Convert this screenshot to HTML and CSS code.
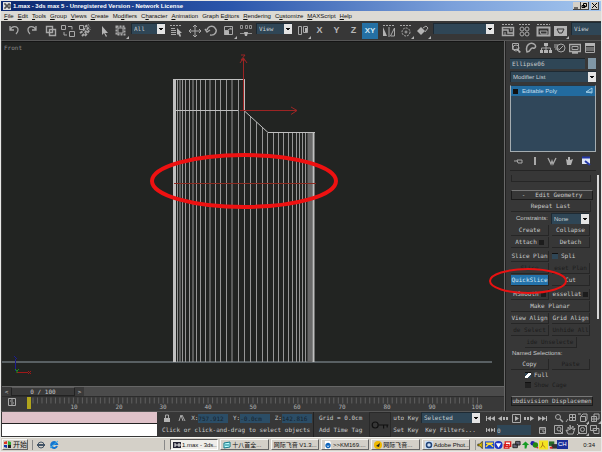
FILE: index.html
```
<!DOCTYPE html>
<html>
<head>
    <meta charset="utf-8">
    <title>1.max - 3ds max 5</title>
    <link rel="stylesheet" href="styles.css">
</head>
<body>
    <!-- title bar -->
    <header class="titlebar">
        <svg class="app-icon" viewBox="0 0 8 8"><path d="M0 0h8v8H0z" fill="#ddd"/><path d="M1 2h2v4H1M5 2h2v4H5zM3 4h2" fill="none" stroke="#222"/></svg>
        <h1>1.max - 3ds max 5 - Unregistered Version - Network License</h1>
        <div class="win-buttons">
            <button aria-label="Minimize"><svg viewBox="0 0 7 7"><path d="M1 6h4" stroke="#000"/></svg></button>
            <button aria-label="Restore"><svg viewBox="0 0 7 7"><path d="M2.500 1.500h3v3h-3zM1 3.500h3v2H1z" fill="none" stroke="#000"/></svg></button>
            <button aria-label="Close" class="close"><svg viewBox="0 0 7 7"><path d="M1 1l5 5M6 1l-5 5" stroke="#000"/></svg></button>
        </div>
    </header>

    <nav class="menu">
        <a href="#"><u>F</u>ile</a><a href="#"><u>E</u>dit</a><a href="#"><u>T</u>ools</a><a href="#"><u>G</u>roup</a><a href="#"><u>V</u>iews</a><a href="#"><u>C</u>reate</a><a href="#">Mo<u>d</u>ifiers</a><a href="#">C<u>h</u>aracter</a><a href="#"><u>A</u>nimation</a><a href="#">Graph E<u>d</u>itors</a><a href="#"><u>R</u>endering</a><a href="#">C<u>u</u>stomize</a><a href="#"><u>M</u>AXScript</a><a href="#"><u>H</u>elp</a>
    </nav>

    <!-- main toolbar -->
    <div class="toolbar">
        <div class="group">
            <button aria-label="Undo"><svg viewBox="0 0 17 17"><path d="M4 4v4h4M4 8c2-5 8-4 8 0 0 2-1 3-2 4" stroke-width="1.300"/></svg></button>
            <button aria-label="Redo"><svg viewBox="0 0 17 17"><path d="M13 4v4H9M13 8c-2-5-8-4-8 0 0 2 1 3 2 4" stroke-width="1.300"/></svg></button>
        </div>
        <div class="group">
            <button aria-label="Link"><svg viewBox="0 0 17 17"><path d="M4.500 4.500h6v6h-6zM7.500 7.500h6v6h-6z" stroke-width="1.400"/></svg></button>
            <button aria-label="Unlink"><svg viewBox="0 0 17 17"><path d="M2.500 3.500h4v4h-4zM10.500 9.500h5v5h-5zM9 4.500h4v3M5 10v3h3"/></svg></button>
            <button aria-label="Bind"><svg viewBox="0 0 17 17"><path d="M3.500 3.500h4v4h-4z"/><path d="M4 11l3-2 3-5 3-1M6 14l3-3 3-5 2-1M9 14l3-4 2-3" stroke-dasharray="3 1" stroke-width="2"/></svg></button>
        </div>
        <div class="group">
            <button aria-label="Select"><svg viewBox="0 0 17 17"><path class="solid" d="M7 4v9l2-2 2 4 1-1-2-3h3z"/></svg></button>
            <button aria-label="Region"><svg viewBox="0 0 17 17"><path d="M4.500 4.500h8v8h-8z" stroke-width="2" stroke-dasharray="2 1"/><path d="M6 6h5v5H6z"/><path class="solid" d="M17 14v3h-3z"/></svg></button>
        </div>
        <select class="combo w34" aria-label="Selection filter"><option>All</option></select>
        <div class="group">
            <button aria-label="Select by name"><svg viewBox="0 0 17 17"><path d="M3 3.500h11" stroke-dasharray="2 1"/><path d="M4 6.500h4M4 8.500h5M4 10.500h5M4 12.500h5"/><path class="solid" d="M10 6v7l1-1 2 3 1-1-1-3h2z"/></svg></button>
        </div>
        <div class="group">
            <button aria-label="Move"><svg viewBox="0 0 17 17"><path d="M9 3v12M3 9h12M7 5l2-2 2 2M7 13l2 2 2-2M5 7L3 9l2 2M13 7l2 2-2 2"/></svg></button>
            <button aria-label="Rotate"><svg viewBox="0 0 17 17"><path d="M7 13c5 1 8-4 5-7-2-3-7-2-8 2M2 7l2 3 3-2" stroke-width="1.400"/></svg></button>
            <button aria-label="Scale"><svg viewBox="0 0 17 17"><path d="M4.500 4.500h8v8h-8zM4.500 8.500h4v4h-4z"/><path class="solid" d="M5 9h4v4H5zM17 14v3h-3z"/><path d="M8 8l3-2v2"/></svg></button>
            <button aria-label="Offset"><svg viewBox="0 0 17 17"><path d="M3.500 3.500h2v3h-2zM8.500 3.500h2v3h-2zM12.500 3.500h2v3h-2zM3 11.500h12" stroke-width=".8"/><path class="solid" d="M7 10h4l-1 4H8z"/></svg></button>
        </div>
        <select class="combo w35" aria-label="Reference system"><option>View</option></select>
        <div class="group">
            <button aria-label="Pivot"><svg viewBox="0 0 17 17"><path d="M4.500 4.500h3v8h-3zM9.500 4.500h4v6h-4z"/><path class="solid" d="M11 6h2v4h-2zM17 14v3h-3z"/></svg></button>
            <button class="axis">X</button>
            <button class="axis">Y</button>
            <button class="axis">Z</button>
            <button class="axis on">XY</button>
        </div>
        <div class="group">
            <button aria-label="Mirror"><svg viewBox="0 0 17 17"><path d="M3 3.500h12" stroke-dasharray="2 1"/><path class="solid" d="M3 5l4 9H3z"/><path d="M9 5v10M14.500 6v8h-4z"/></svg></button>
            <button aria-label="Array"><svg viewBox="0 0 17 17"><path d="M3 3.500h12" stroke-dasharray="2 1"/><circle cx="9" cy="10" r="4" stroke-dasharray="2 1"/><circle cx="9" cy="10" r="1"/><path class="solid" d="M17 14v3h-3z"/></svg></button>
            <button aria-label="Selection sets"><svg viewBox="0 0 17 17"><path class="solid" d="M3 9l4-4 4 4-4 4zM17 14v3h-3z"/><path d="M9 6l3-2 2 2-3 4"/></svg></button>
        </div>
        <select class="combo w61" aria-label="Named sets"><option></option></select>
        <div class="group far">
            <button aria-label="Curve editor"><svg viewBox="0 0 17 17"><path d="M3 2.500h12" stroke-dasharray="2 1"/><path d="M3.500 5.500h11v8h-11zM4 8h5v3h5" stroke-width="1.500"/><path d="M6 13v-3M12 9V6"/></svg></button>
            <button aria-label="Materials"><svg viewBox="0 0 17 17"><path d="M3 2.500h11" stroke-dasharray="2 1"/><circle cx="6" cy="7" r="2"/><circle cx="11" cy="7" r="2"/><circle cx="6" cy="12" r="2"/><circle cx="11" cy="12" r="2"/></svg></button>
        </div>
        <div class="group">
            <button aria-label="Render scene"><svg viewBox="0 0 17 17"><path d="M2 2.500h13" stroke-dasharray="2 1"/><path d="M2.500 5.500h12v8h-12z" stroke-width="2"/><path d="M5 9h7v3H6z"/></svg></button>
            <button aria-label="Quick render"><svg viewBox="0 0 17 17"><path class="solid" d="M2 4h13v10H2z"/><path d="M5 7h7l-2 4H7z" stroke="#333"/><path class="solid" d="M17 14v3h-3z"/></svg></button>
        </div>
        <select class="combo plain" aria-label="Render type"><option>View</option></select>
    </div>

    <main class="work">
        <section class="left">
            <!-- front viewport -->
            <div class="viewport">
                <svg viewBox="2 42 502 344">
                    <text class="view-name" x="4" y="50">Front</text>
                    <path d="M2 362H492" stroke="#596063" stroke-width="2"/>
                    <g class="wire">
                        <path class="bright" d="M174.500 79V362" stroke-width="3"/>
                        <path d="M177.500 79V362M180 79V362M182.500 79V362M185.500 79V362M189.500 79V362M193 79V362M196.500 79V362M200.500 79V362M205.500 79V362M210 79V362M215.500 79V362M220.500 79V362M226.500 79V362M232 79V362M238.500 79V362M244.500 79V362"/>
                        <path d="M250.500 117V362M256.500 122V362M262.500 128V362M267.500 133V362M273.500 133V362M278.500 133V362M283.500 133V362M288.500 133V362M292.500 133V362M296.500 133V362M299.500 133V362M302.500 133V362M305.500 133V362"/>
                        <path d="M310 133V362" stroke="#686868" stroke-width="5"/>
                        <path class="bright" d="M313.500 133V362" stroke-width="2"/>
                        <path class="bright" d="M173 79.500H244.500V111L268 132.500H315M174 110.500H238"/>
                    </g>
                    <path d="M174 183.500H316" stroke="#8a2a20"/>
                    <g class="gizmo">
                        <path d="M243.500 111V58M240 63l3.500-5 3.500 5M240 110.500H297M291 107l6 3.500-6 4M241 55h4l-4 5h4"/>
                    </g>
                    <ellipse class="mark" cx="244" cy="181" rx="92" ry="26"/>
                    <path d="M15.500 371V359M14 356l3 3" stroke="#1c1c90" fill="none"/>
                    <path d="M17 372.500H28M28 371l3 3M31 371l-3 3" stroke="#a01818" fill="none"/>
                    <path d="M15 369l2 2v2M19 369l-2 2" stroke="#218c21" fill="none"/>
                </svg>
            </div>
            <div class="timeslider">
                <button aria-label="Previous">&lt;</button>
                <button class="thumb">0 / 100</button>
                <button aria-label="Next">&gt;</button>
            </div>
            <div class="ruler">
                <svg viewBox="2 398 502 14">
                    <path d="M28 401.500H480" stroke="#606060" stroke-width="6" stroke-dasharray="1 3.490"/>
                    <path d="M8.500 399.500h7v7h-7zM12 400v6M10 402h1M13 404h1" fill="none" stroke="#aaa"/>
                    <path d="M27 398h4v12h-4z" fill="#b1a51c"/>
                    <g class="ticks">
                        <text x="74" y="410">10</text><text x="119" y="410">20</text><text x="163" y="410">30</text><text x="208" y="410">40</text><text x="253" y="410">50</text><text x="297" y="410">60</text><text x="342" y="410">70</text><text x="387" y="410">80</text><text x="432" y="410">90</text><text x="477" y="410">100</text>
                    </g>
                </svg>
            </div>
        </section>

        <!-- command panel -->
        <aside class="panel">
            <div class="tabs">
                <button aria-label="Create"><svg viewBox="0 0 12 12"><path d="M2.500 1.500h6v6h-6z"/><circle cx="6" cy="6" r="3"/><path class="solid" d="M6 5l5 5-2 1z"/></svg></button>
                <button aria-label="Modify"><svg viewBox="0 0 12 12"><path d="M2 10C0 3 5 0 9 2c3 2 1 5-1 4-3-1-2 4-6 4z" stroke-width="1.500"/></svg></button>
                <button aria-label="Hierarchy"><svg viewBox="0 0 12 12"><path class="solid" d="M4 1h4v3H4zM0 8h3v3H0zM4 8h4v3H4zM9 8h3v3H9z"/><path d="M6 4v4M1.500 8V6h9v2"/></svg></button>
                <button aria-label="Motion"><svg viewBox="0 0 12 12"><circle cx="7" cy="6" r="4"/><path d="M0 3h4M0 5h4M1 7h4M5 8l4-4"/></svg></button>
                <button aria-label="Display"><svg viewBox="0 0 12 12"><path d="M.5 2.500h11v7H.5zM3 11h6" stroke-width="1.500"/><path d="M3 4.500h6v3H3z"/></svg></button>
                <button aria-label="Utilities"><svg viewBox="0 0 12 12"><path class="solid" d="M1 1h10v3H1z"/><path d="M2 6h8M2 8h8M1.500 4v6.500h9V4"/></svg></button>
            </div>
            <div class="name-row">
                <input type="text" value="Ellipse06" aria-label="Object name">
                <button class="swatch" aria-label="Object color"></button>
            </div>
            <select class="combo modlist" aria-label="Modifier list"><option>Modifier List</option></select>
            <div class="stack">
                <div class="stack-item"><span class="plus"></span>Editable Poly<svg viewBox="0 0 8 8"><path d="M1 5l6-4v5zM1 5h6" fill="none" stroke="#9ecbe4"/></svg></div>
            </div>
            <div class="stack-tools">
                <button aria-label="Pin stack"><svg viewBox="0 0 12 12"><path d="M2 6h3M5 5h5v3H6z"/></svg></button>
                <button aria-label="Show end result"><svg viewBox="0 0 12 12"><path d="M6 2v8" stroke-width="2"/></svg></button>
                <button aria-label="Make unique"><svg viewBox="0 0 12 12"><path d="M2 3l3 6 1-3 1 3 3-6" stroke-width="1.300"/></svg></button>
                <button aria-label="Remove modifier"><svg viewBox="0 0 12 12"><path class="solid" d="M3 4l2 1V2h2v3l3-1-2 6H4z"/></svg></button>
                <button aria-label="Configure sets"><svg viewBox="0 0 12 12"><path d="M2 2h8v7H2z" fill="#dde4f4" stroke="none"/><path d="M2 2.500h8M5 6l5 4" stroke="#2438a8" stroke-width="2"/></svg></button>
            </div>

            <div class="rollouts">
                <div class="rollout-end"></div>
                <button class="rollout-head"><span>-</span>Edit Geometry</button>
                <button class="pbtn wide">Repeat Last</button>
                <div class="constraints">
                    <label for="constraints">Constraints:</label>
                    <select id="constraints" class="combo"><option>None</option></select>
                </div>
                <div class="grid">
                    <button class="pbtn">Create</button>
                    <button class="pbtn">Collapse</button>
                    <button class="pbtn">Attach<i class="box"></i></button>
                    <button class="pbtn">Detach</button>
                </div>
                <div class="grid">
                    <button class="pbtn">Slice Plan</button>
                    <label class="check"><input type="checkbox">Spli</label>
                    <button class="pbtn" disabled>Slice</button>
                    <button class="pbtn" disabled>eset Plan</button>
                    <button class="pbtn active">QuickSlice</button>
                    <button class="pbtn">Cut</button>
                </div>
                <div class="grid">
                    <button class="pbtn">MSmooth<i class="box"></i></button>
                    <button class="pbtn">essellat<i class="box"></i></button>
                    <button class="pbtn span">Make Planar</button>
                    <button class="pbtn">View Align</button>
                    <button class="pbtn">Grid Align</button>
                    <button class="pbtn" disabled>de Select</button>
                    <button class="pbtn" disabled>Unhide All</button>
                    <button class="pbtn span narrow" disabled>ide Unselecte</button>
                </div>
                <p class="caption">Named Selections:</p>
                <div class="grid">
                    <button class="pbtn">Copy</button>
                    <button class="pbtn" disabled>Paste</button>
                </div>
                <div class="checks">
                    <label class="check"><input type="checkbox" checked>Full</label>
                    <label class="check off"><input type="checkbox" checked disabled>Show Cage</label>
                </div>
                <button class="rollout-head last">ubdivision Displacemen</button>
                <svg class="callout" viewBox="0 0 80 28"><ellipse cx="40" cy="14" rx="38" ry="12"/></svg>
            </div>
        </aside>
    </main>

    <!-- status bar -->
    <footer class="status">
        <div class="listener"><div class="macro"></div><div class="script"></div></div>
        <div class="prompt">
            <div class="coords">
                <svg viewBox="0 0 10 10"><path class="solid" d="M2 5h6v4H2z"/><path d="M3.500 5V2h3v3"/></svg>
                <svg viewBox="0 0 10 10"><path d="M2 8l2-6 2 6M5 2l3 6"/></svg>
                <label>X:<input type="text" value="757.912"></label>
                <label>Y:<input type="text" value="-0.0cm"></label>
                <label>Z:<input type="text" value="142.816"></label>
            </div>
            <div class="line">Click or click-and-drag to select objects</div>
        </div>
        <div class="gridinfo">
            <div class="line">Grid = 0.0cm</div>
            <button>Add Time Tag</button>
        </div>
        <button class="key" aria-label="Set keys"><svg viewBox="0 0 16 10"><circle cx="4" cy="5" r="2.500"/><path d="M7 5h8M11 5v3M14 5v2"/></svg></button>
        <div class="keys">
            <button>uto Key</button><select class="combo" aria-label="Key set"><option>Selected</option></select>
            <button>Set Key</button><button>Key Filters...</button>
        </div>
        <div class="transport">
            <button aria-label="Start"><svg viewBox="0 0 12 10"><path class="solid" d="M2 3h1v5H2zM7 3v5L3 5.500zM11 3v5L7 5.500z"/></svg></button>
            <button aria-label="Back"><svg viewBox="0 0 12 10"><path class="solid" d="M5 3v5L1 5.500zM6 4h2v3H6zM9 4h2v3H9z"/></svg></button>
            <button aria-label="Play"><svg viewBox="0 0 12 10"><path d="M2.500 1.500h8v8h-8z"/><path class="solid" d="M5 3v5l4-2.500z"/></svg></button>
            <button aria-label="Forward"><svg viewBox="0 0 12 10"><path class="solid" d="M7 3v5l4-2.500zM4 4h2v3H4zM1 4h2v3H1z"/></svg></button>
            <button aria-label="End"><svg viewBox="0 0 12 10"><path class="solid" d="M10 3h1v5h-1zM6 3v5l4-2.500zM2 3v5l4-2.500z"/></svg></button>
            <button aria-label="Key mode"><svg viewBox="0 0 12 10"><path class="solid" d="M2 3h1v4H2zM3 5l3-2v4zM10 3h1v4h-1zM10 5L7 3v4z"/></svg></button>
            <input type="text" value="0" aria-label="Frame">
            <button aria-label="Time config"><svg viewBox="0 0 12 10"><path d="M3.500 2.500h6v6h-6zM3 4h7M7 5v2h2"/></svg></button>
        </div>
        <div class="nav">
            <button aria-label="Zoom"><svg viewBox="0 0 12 12"><circle cx="5" cy="5" r="2.500"/><path d="M7 7l3 3" stroke-width="1.500"/></svg></button>
            <button aria-label="Zoom all"><svg viewBox="0 0 12 12"><path d="M4.500 2.500h6v6h-6zM4 5.500h7M7.500 2v7M3 7l-2 3"/></svg></button>
            <button aria-label="Extents"><svg viewBox="0 0 12 12"><path d="M3.500 4.500h5v5h-5zM4 4l2-2h4v5L9 9M1 2h3"/><path class="solid" d="M12 9v3H9z"/></svg></button>
            <button aria-label="Extents all"><svg viewBox="0 0 12 12"><path d="M2.500 4.500h5v5h-5zM5 4V2h5v5H8M5 5v4M3 7h4"/><path class="solid" d="M12 9v3H9z"/></svg></button>
            <button aria-label="Zoom region"><svg viewBox="0 0 12 12"><path d="M1.500 1.500h8v8h-8z"/><circle cx="6" cy="5" r="2"/><path d="M7 7l3 3"/></svg></button>
            <button aria-label="Pan"><svg viewBox="0 0 12 12"><path d="M3 10L1 6l2 1V3l2 3V1l1 4 2-3v4l2-2-2 6z"/></svg></button>
            <button aria-label="Arc rotate"><svg viewBox="0 0 12 12"><path d="M1.500 1.500h8v8h-8zM0 0l3 3M11 0L8 3M0 11l3-3"/><circle cx="5.500" cy="5.500" r="2"/><path class="solid" d="M12 9v3H9z"/></svg></button>
            <button aria-label="Maximize"><svg viewBox="0 0 12 12"><path d="M1.500 1.500h6v5h-6zM4 4.500h6v5H5z"/></svg></button>
        </div>
    </footer>

    <!-- taskbar -->
    <div class="taskbar">
        <button class="start"><svg viewBox="0 0 9 9"><path d="M1 2l3-1v3H1z" fill="#d32"/><path d="M5 1l3 1v3H5z" fill="#3a3"/><path d="M1 5h3v3L1 7z" fill="#13a"/><path d="M5 5h3v3H5z" fill="#222"/></svg>开始</button>
        <div class="quick">
            <svg viewBox="0 0 10 10"><circle cx="5" cy="5" r="3" fill="none" stroke="#456"/><path d="M1 5h8" stroke="#456" stroke-width="2"/></svg>
            <svg viewBox="0 0 10 10"><path d="M8 6A3 3 0 1 1 8 4H3" fill="none" stroke="#1575d0" stroke-width="2"/><path d="M1 8l8-7" stroke="#3ab0e8"/></svg>
        </div>
        <div class="tasks">
            <button class="current"><svg viewBox="0 0 8 8"><path d="M0 1h8v6H0z" fill="#223"/><path d="M1 3h2v2H1M5 3h2v2H5z" fill="none" stroke="#eee"/></svg>1.max - 3ds...</button>
            <button><svg viewBox="0 0 8 8"><path d="M1 2l6-1v5L1 7z" fill="#bff" stroke="#178"/><path d="M2 4h4" stroke="#178"/></svg>十八首全...</button>
            <button>网际飞音 V1.3...</button>
            <button><svg viewBox="0 0 8 8"><path d="M1 0h5l1 2v6H1z" fill="#fff"/><path d="M6 5A2 2 0 1 1 6 4H3" fill="none" stroke="#16b" stroke-width="1.500"/></svg>&gt;&gt;KM169....</button>
            <button><svg viewBox="0 0 8 8"><circle cx="4" cy="4" r="4" fill="#eeb800"/><path d="M2 5l4-3-1 4z" fill="#222"/></svg>网际飞音...</button>
            <button><svg viewBox="0 0 8 8"><path d="M0 0h8v8H0z" fill="#cfe0f4"/><circle cx="4" cy="4" r="2.500" fill="none" stroke="#247" stroke-width="1.500"/></svg>Adobe Phot...</button>
        </div>
        <div class="tray">
            <svg viewBox="0 0 10 10"><path d="M2 4h2l3-3v8L4 6H2z" fill="#d8b800" stroke="#222" stroke-width=".8"/></svg>
            <svg viewBox="0 0 10 10"><path d="M0 1h10v8H0z" fill="#1b49c8"/><path d="M1 7l4-4 4 4M1 3h8" fill="none" stroke="#fd3" stroke-width="1.500"/></svg>
            <svg viewBox="0 0 10 10"><circle cx="5" cy="5" r="4.500" fill="#1c35c4"/><path d="M2 3h6L5 8z" fill="#fff"/></svg>
            <svg viewBox="0 0 10 10"><path d="M2.500 1.500h6v5h-6zM1.500 4.500h5v4h-5z" fill="#fff" stroke="#d81c1c" stroke-width="1.500"/></svg>
            <svg viewBox="0 0 10 10"><path d="M4 1h5v4H4zM1 4h5v4H1z" fill="#667" stroke="#222"/></svg>
            <svg viewBox="0 0 10 10"><path d="M5 1l4 4H7l-1 4H4V5H1z" fill="#159c24"/></svg>
            <svg viewBox="0 0 10 10"><circle cx="3" cy="3" r="2.500" fill="#22a"/><circle cx="6" cy="5" r="3" fill="#281"/><path d="M6 8l3-1v2z" fill="#c22"/></svg>
            <svg viewBox="0 0 10 10"><path d="M0 0h10v10H0z" fill="#f4e420"/><path d="M4 2v3M2 8l2-3 3 3" fill="none" stroke="#a66d10"/></svg>
            <svg viewBox="0 0 10 10"><path d="M1 1h6v5H1z" fill="#286b28"/><path d="M4 4h6v5H4z" fill="#333"/><path d="M2 7h3v2H2z" fill="#d22"/></svg>
            <span class="ime">CH</span>
            <time>0:34</time>
        </div>
    </div>
</body>
</html>
```

FILE: styles.css
```
* {
    box-sizing: border-box;
}
body {
    margin: 0;
    padding: 1px;
    min-height: 100vh;
    display: flex;
    flex-direction: column;
    background: #e8e8e6;
    color: #cacaca;
    font: 6px/8px "DejaVu Sans Mono", "Noto Sans CJK SC", monospace;
    overflow-x: hidden;
}
button, input, select {
    margin: 0;
    padding: 0;
    border: 0;
    border-radius: 0;
    background: none;
    color: inherit;
    font: inherit;
    white-space: nowrap;
}
svg {
    display: block;
    flex: none;
}

/* title bar + menu */
.titlebar {
    display: flex;
    align-items: center;
    height: 10px;
    padding: 0 2px;
    gap: 2px;
    background: linear-gradient(90deg, #0b286e, #2b56ab 38%, #7ba0da 75%, #a3c5ee);
    color: #fff;
}
.titlebar h1 {
    flex: 1;
    margin: 0;
    font: bold 6px/10px "Liberation Sans", sans-serif;
}
.app-icon {
    width: 8px;
    height: 8px;
}
.win-buttons {
    display: flex;
}
.win-buttons button {
    width: 8px;
    height: 8px;
    background: #d4d0c8;
    border-right: 1px solid #444;
    border-bottom: 1px solid #444;
}
.win-buttons .close {
    margin-left: 2px;
}
.win-buttons svg {
    width: 7px;
    height: 7px;
}
.menu {
    display: flex;
    gap: 4px;
    height: 10px;
    padding: 0 3px;
    background: #dcdad4;
    font: 6px/10px "Liberation Sans", sans-serif;
}
.menu a {
    color: #111;
    text-decoration: none;
}

/* toolbar */
.toolbar {
    display: flex;
    align-items: center;
    gap: 2px;
    height: 20px;
    padding-left: 5px;
    background: #373737;
    border-bottom: 1px solid #555;
}
.group {
    display: flex;
    align-items: center;
}
.group.far {
    margin-left: 3px;
}
.group button {
    width: 17px;
    height: 17px;
}
.group svg {
    width: 17px;
    height: 17px;
}
.toolbar svg, .panel svg, .status svg {
    fill: none;
    stroke: #a9a9a9;
}
svg .solid {
    fill: #b4b4b4;
    stroke: none;
}
.group .axis {
    color: #b8b8b8;
    font: bold 9px/17px "Liberation Sans", sans-serif;
}
.group .axis.on {
    width: 16px;
    height: 16px;
    background: #2470a4;
    color: #cfe6f4;
    font-size: 8px;
    line-height: 16px;
}
.combo {
    appearance: none;
    height: 11px;
    padding: 0 10px 0 2px;
    border-top: 1px solid #1e2a33;
    border-left: 1px solid #1e2a33;
    color: #c8d0d4;
    background-color: #2f4656;
    background-image: linear-gradient(#111, #111), linear-gradient(#111, #111), linear-gradient(#e4e4e4, #e4e4e4);
    background-position: right 2px top 4px, right 3px top 5px, right;
    background-size: 4px 1px, 2px 1px, 8px 100%;
    background-repeat: no-repeat;
}
.toolbar .combo {
    margin-bottom: 4px;
}
.w34 { width: 34px; }
.w35 { width: 36px; }
.w61 { width: 61px; }
.toolbar .plain {
    flex: 1;
    height: 13px;
    background-image: none;
}

/* work area */
.work {
    display: flex;
}
.left {
    flex: 1;
    min-width: 0;
    background: #3a3a3a;
    border-left: 1px solid #3a3a3a;
    border-right: 1px solid #686868;
}
.viewport {
    background: #222422;
    border-top: 1px solid #151515;
}
.viewport svg, .ruler svg {
    width: 100%;
}
.view-name {
    fill: #8b8b8b;
}
.wire {
    fill: none;
    stroke: #969696;
}
.wire .bright {
    stroke: #c0c0c0;
}
.gizmo {
    fill: none;
    stroke: #9c2424;
}
.mark {
    fill: none;
    stroke: #ee1111;
    stroke-width: 4;
}
.timeslider {
    display: flex;
    height: 11px;
    background: #4b4b4b;
    border-top: 1px solid #666;
    border-bottom: 1px solid #2c2c2c;
}
.timeslider button {
    width: 9px;
    background: #3a3a3a;
}
.timeslider .thumb {
    width: 64px;
    border: 1px solid #222;
    border-top-color: #5a5a5a;
}
.ruler {
    background: #393939;
}
.ticks {
    fill: #b0b0b0;
    text-anchor: middle;
}

/* command panel */
.panel {
    width: 96px;
    padding: 1px 5px 0 4px;
    background: #373737;
    border-left: 1px solid #222;
}
.tabs {
    display: flex;
    justify-content: space-between;
    height: 16px;
}
.panel button svg {
    width: 12px;
    height: 12px;
}
.tabs button {
    width: 12px;
    height: 12px;
}
.name-row {
    display: flex;
    gap: 3px;
    height: 11px;
    margin-bottom: 2px;
}
.name-row input {
    flex: 1;
    min-width: 0;
    padding-left: 2px;
    background: #2f4656;
    border-top: 1px solid #1a242b;
}
.swatch {
    width: 8px;
    background: #8097a6;
}
.modlist {
    display: block;
    width: 100%;
    font-family: "Liberation Sans", sans-serif;
}
.stack {
    height: 67px;
    margin-top: 3px;
    background: #30475a;
    border: 1px solid #a5adb1;
    border-top-color: #2a3740;
}
.stack-item {
    display: flex;
    align-items: center;
    gap: 4px;
    height: 10px;
    padding: 0 2px;
    background: #226b9f;
    color: #c9deea;
    font-family: "Liberation Sans", sans-serif;
}
.stack-item svg {
    width: 8px;
    height: 8px;
    margin-left: auto;
}
.plus {
    width: 5px;
    height: 5px;
    background: #111;
}
.stack-tools {
    display: flex;
    justify-content: space-between;
    height: 19px;
    padding: 3px 4px 0 2px;
    border-bottom: 1px solid #252525;
}
.stack-tools button {
    width: 12px;
    height: 12px;
}
.rollouts {
    position: relative;
    margin: 4px -3px 0 0;
    padding: 0 1px;
    background: linear-gradient(#d8d8d8, #d8d8d8) right top / 2px 144px no-repeat;
}
.rollout-end {
    height: 7px;
    margin-right: 7px;
    border: 1px solid #262626;
    border-top: 0;
}
.rollout-head {
    display: flex;
    justify-content: center;
    width: 82px;
    height: 10px;
    margin: 8px 0 1px;
    line-height: 8px;
    border: 1px solid #1c1c1c;
    border-top-color: #777;
    overflow: hidden;
}
.rollout-head span {
    margin-right: 10px;
}
.rollout-head.last {
    margin: 6px 0 0;
}
.pbtn {
    display: flex;
    align-items: center;
    justify-content: center;
    gap: 2px;
    min-width: 0;
    height: 11px;
    border-right: 1px solid #262626;
    border-bottom: 1px solid #262626;
    overflow: hidden;
}
.pbtn:disabled {
    color: #1c1c1c;
}
.pbtn.active {
    background: #2472aa;
    color: #d6e9f4;
}
.pbtn.wide {
    width: 80px;
}
.pbtn.span {
    grid-column: 1 / 3;
}
.pbtn.narrow {
    width: 52px;
    justify-self: center;
}
.box {
    width: 5px;
    height: 5px;
    background: #1c1c1c;
}
.constraints {
    display: flex;
    justify-content: flex-end;
    align-items: center;
    gap: 3px;
    width: 78px;
    height: 12px;
    margin-bottom: 1px;
    font-family: "Liberation Sans", sans-serif;
}
.constraints .combo {
    width: 38px;
}
.grid {
    display: grid;
    grid-template-columns: 38px 38px;
    gap: 1px 3px;
    margin-bottom: 3px;
}
.check {
    display: flex;
    align-items: center;
    gap: 3px;
    height: 10px;
}
.check input {
    appearance: none;
    width: 6px;
    height: 6px;
    background: #2f4656;
    border-top: 1px solid #111;
}
.check input:checked {
    background: linear-gradient(135deg, transparent 35%, #fff 35%, #fff 65%, transparent 65%) #2f4656;
}
.check.off {
    color: #1c1c1c;
}
.check.off input:checked {
    background: #222;
}
.caption {
    margin: -2px 0 1px 1px;
    font: 6px/9px "Liberation Sans", sans-serif;
}
.rollouts .caption + .grid {
    margin-bottom: 0;
}
.checks {
    padding-left: 14px;
}
/* callout ring lies over the QuickSlice button and the viewport edge */
.panel .callout {
    position: absolute;
    left: -22px;
    top: 92px;
    width: 80px;
    height: 28px;
    stroke: #e81212;
    stroke-width: 2;
    pointer-events: none;
}

/* status bar */
.status {
    display: flex;
    height: 26px;
    padding-left: 1px;
    background: #373737;
    border-top: 1px solid #555;
}
.listener {
    width: 155px;
}
.macro {
    height: 12px;
    background: #dfc2c9;
    border-bottom: 1px solid #222;
}
.script {
    height: 12px;
    background: #fff;
}
.prompt {
    width: 157px;
    padding: 0 1px 0 5px;
    border-right: 1px solid #222;
}
.coords {
    display: flex;
    justify-content: space-between;
    align-items: center;
    height: 12px;
}
.coords svg {
    width: 10px;
    height: 10px;
}
.coords label {
    display: flex;
}
.coords input {
    width: 30px;
    height: 9px;
    background: #2b4d66;
    color: #15222c;
}
.line {
    height: 12px;
    line-height: 12px;
    white-space: nowrap;
}
.gridinfo {
    width: 55px;
    padding-left: 5px;
}
.gridinfo button {
    height: 12px;
}
.key {
    width: 22px;
    border: 1px solid #292929;
}
.key svg {
    width: 20px;
    height: 12px;
    stroke: #111;
}
.keys {
    display: grid;
    grid-template: 12px 12px / 30px 59px;
    width: 90px;
}
.transport {
    display: grid;
    grid-template: 12px 12px / repeat(5, 13px);
    margin-left: 3px;
    align-items: center;
}
.transport svg {
    width: 12px;
    height: 10px;
}
.transport input {
    grid-column: 2 / 5;
    width: 34px;
    height: 10px;
    background: #2f4656;
}
.nav {
    display: grid;
    grid-template: 12px 12px / repeat(4, 12px);
    margin-left: auto;
}
.nav svg {
    width: 12px;
    height: 12px;
}

/* windows taskbar */
.taskbar {
    display: flex;
    align-items: center;
    height: 14px;
    padding: 1px;
    background: #d4d0c8;
    border-top: 1px solid #f4f4f0;
    color: #111;
    font: 6px/10px "Liberation Sans", "Noto Sans CJK SC", sans-serif;
}
.start, .tasks button {
    display: flex;
    align-items: center;
    gap: 1px;
    height: 11px;
    border: 1px solid #f6f6f4;
    border-right-color: #666;
    border-bottom-color: #666;
    overflow: hidden;
}
.start {
    width: 26px;
    font-size: 7px;
}
.start svg {
    width: 9px;
    height: 9px;
}
.quick {
    display: flex;
    gap: 3px;
    width: 133px;
    margin-left: 4px;
    padding-left: 3px;
    border-left: 1px solid #888;
    border-right: 1px solid #888;
}
.quick svg {
    width: 10px;
    height: 10px;
}
.tasks {
    display: flex;
    flex: 1;
    gap: 2px;
    margin: 0 5px;
}
.tasks button {
    flex: 1;
    min-width: 0;
    padding-left: 2px;
}
.tasks .current {
    background: #efede9;
    border-color: #555 #fff #fff #555;
}
.tasks svg {
    width: 8px;
    height: 8px;
}
.tray {
    display: flex;
    align-items: center;
    width: 125px;
    border-left: 1px solid #999;
}
.tray svg {
    width: 9px;
    height: 10px;
}
.ime {
    padding: 0 1px;
    background: #1a2f9a;
    color: #fff;
    line-height: 9px;
}
.tray time {
    margin-left: auto;
    margin-right: 5px;
}
```
